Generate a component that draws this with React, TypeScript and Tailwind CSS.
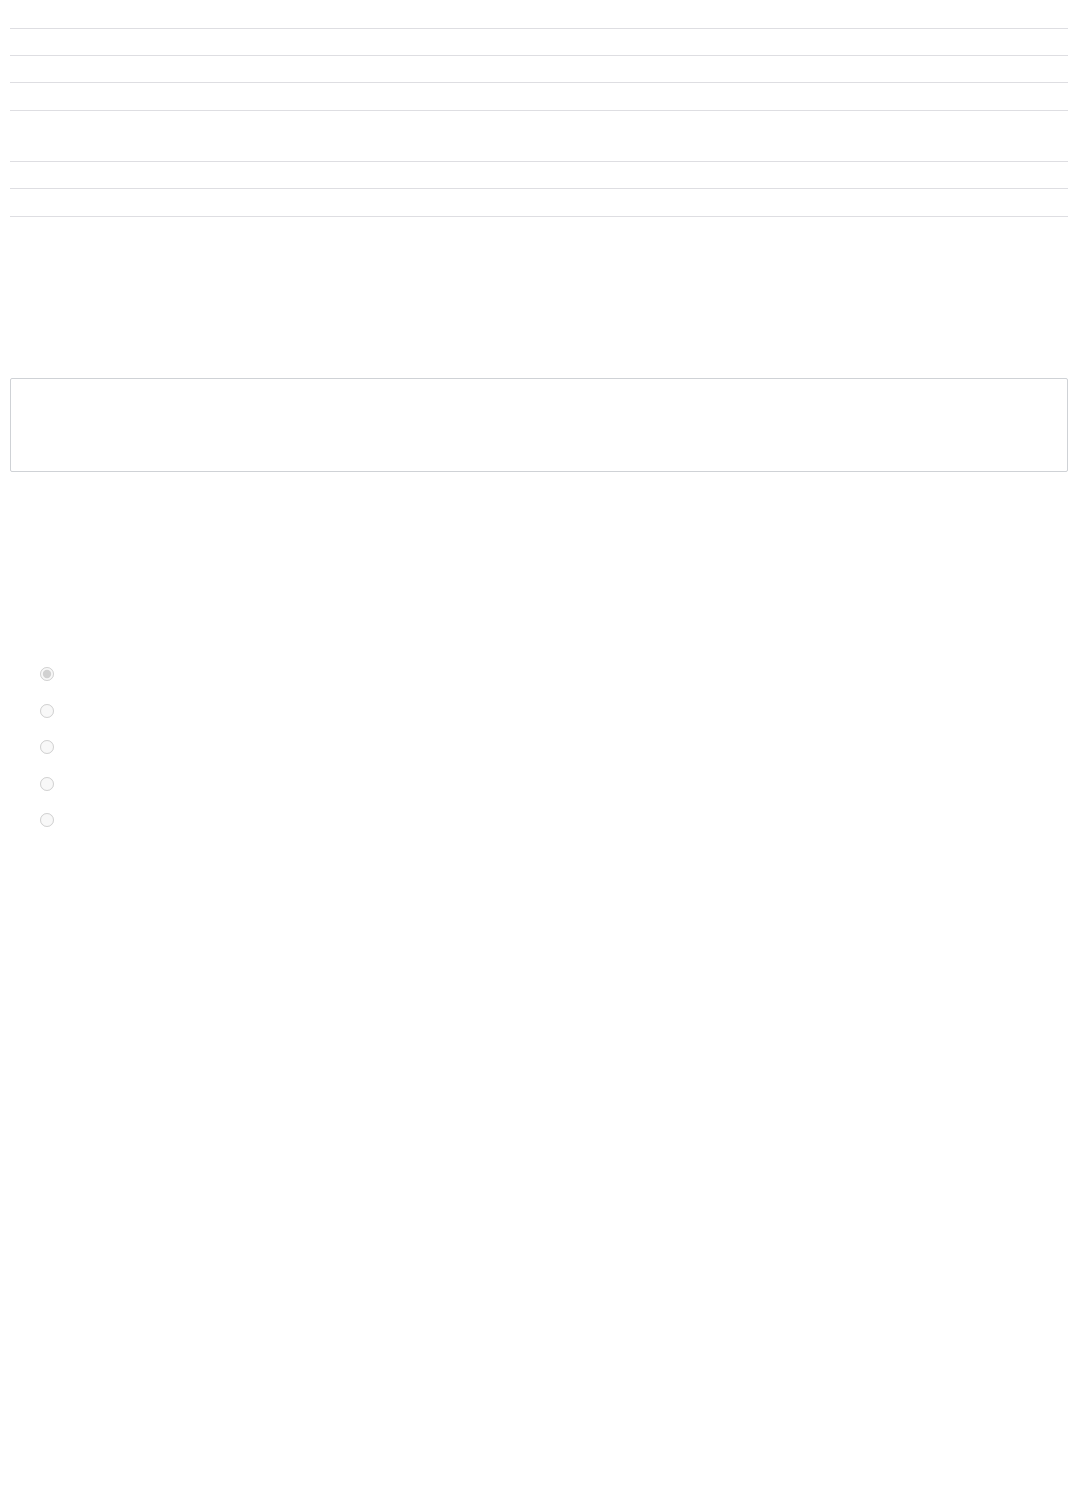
const rows = ['h-[27px]', 'h-[27px]', 'h-[28px]', 'h-[51px]', 'h-[27px]', 'h-[28px]'];

export default function App() {
  return (
    <div className="min-h-[1497px] bg-white pl-[10px] pr-[9px] font-['Liberation_Sans',sans-serif]">
      <div className="h-[28px]" />
      {rows.map((h, i) => (
        <div key={i} className={`${h} border-t border-[#dedee2]`} />
      ))}
      <div className="border-t border-[#dedee2]" />

      <div className="mt-[161px] h-[94px] rounded-[2px] border border-[#cfd2d6]" />

      <div className="mt-[195px] flex flex-col pl-[30px]">
        {[0, 1, 2, 3, 4].map((i) => (
          <label key={i} className="flex h-[36.5px] items-start">
            <input
              type="radio"
              name="opt"
              disabled
              defaultChecked={i === 0}
              className="m-0 h-[14px] w-[14px]"
            />
          </label>
        ))}
      </div>
    </div>
  );
}
